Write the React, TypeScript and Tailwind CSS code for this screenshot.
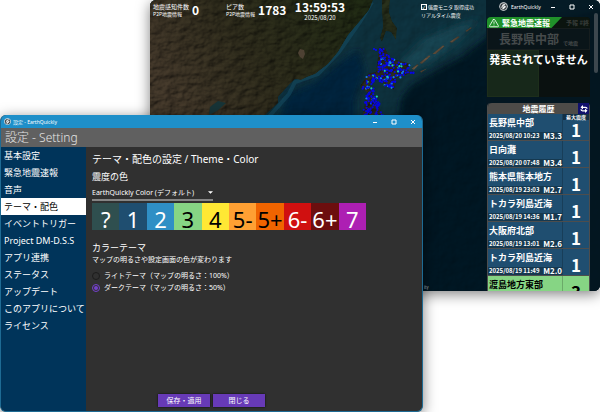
import { useState } from 'react'
import { FiAlertTriangle } from 'react-icons/fi'

interface Quake {
  place: string
  time?: string
  magnitude?: string
  intensity: string
  className: string
}

const quakes: Quake[] = [
  { place: '長野県中部', time: '2025/08/20 10:23', magnitude: 'M3.3', intensity: '1', className: 'bg-[#1f4e70] text-white' },
  { place: '日向灘', time: '2025/08/20 07:48', magnitude: 'M3.4', intensity: '1', className: 'bg-[#1f4e70] text-white' },
  { place: '熊本県熊本地方', time: '2025/08/19 23:03', magnitude: 'M2.7', intensity: '1', className: 'bg-[#1f4e70] text-white' },
  { place: 'トカラ列島近海', time: '2025/08/19 14:36', magnitude: 'M1.7', intensity: '1', className: 'bg-[#1f4e70] text-white' },
  { place: '大阪府北部', time: '2025/08/19 13:01', magnitude: 'M2.6', intensity: '1', className: 'bg-[#1f4e70] text-white' },
  { place: 'トカラ列島近海', time: '2025/08/19 11:49', magnitude: 'M2.0', intensity: '1', className: 'bg-[#1f4e70] text-white' },
  { place: '渡島地方東部', intensity: '3', className: 'bg-[#86d584] text-black' },
]

const navItems = [
  '基本設定',
  '緊急地震速報',
  '音声',
  'テーマ・配色',
  'イベントトリガー',
  'Project DM-D.S.S',
  'アプリ連携',
  'ステータス',
  'アップデート',
  'このアプリについて',
  'ライセンス',
]

const scale = [
  { label: '?', className: 'bg-[#2f4f4f] text-white' },
  { label: '1', className: 'bg-[#1f4e70] text-white' },
  { label: '2', className: 'bg-[#2f8fc5] text-white' },
  { label: '3', className: 'bg-[#86d584] text-black' },
  { label: '4', className: 'bg-[#ffe834] text-black' },
  { label: '5-', className: 'bg-[#ffa033] text-black' },
  { label: '5+', className: 'bg-[#f06400] text-black' },
  { label: '6-', className: 'bg-[#d01010] text-white' },
  { label: '6+', className: 'bg-[#6c0e0e] text-white' },
  { label: '7', className: 'bg-[#ad1fb3] text-white' },
]

type Point = [number, number]

// Station areas: Hokkaido and northern Tohoku
const hokkaido: Point[] = [[229, 47], [235, 48], [240, 58], [250, 62], [261, 64], [257, 70], [266, 72], [255, 77], [246, 78], [244, 90], [232, 84], [227, 79], [222, 84], [214, 87], [214, 80], [219, 73], [226, 74], [228, 66], [230, 57]]
const tohoku: Point[] = [[210, 87], [222, 83], [224, 90], [227, 97], [230, 104], [234, 117], [212, 117], [214, 104], [217, 93]]

function inside([x, y]: Point, area: Point[]) {
  let hit = false
  for (let i = 0, j = area.length - 1; i < area.length; j = i++) {
    const [xi, yi] = area[i]
    const [xj, yj] = area[j]
    if (yi > y !== yj > y && x < ((xj - xi) * (y - yi)) / (yj - yi) + xi) hit = !hit
  }
  return hit
}

function makeStations() {
  let seed = 11
  const next = () => {
    seed = (seed * 16807) % 2147483647
    return seed / 2147483647
  }
  const stations: { x: number; y: number; color: string }[] = [
    { x: 224, y: 49, color: '#0808f0' },
    { x: 226, y: 50, color: '#0808f0' },
  ]
  for (let i = 0; i < 1000; i++) {
    const point: Point = [205 + next() * 64, 44 + next() * 74]
    const pick = next()
    if (!inside(point, hokkaido) && !inside(point, tohoku)) continue
    const warm = point[0] > 244 || (point[1] > 74 && point[1] < 92)
    const color = pick > (warm ? 0.88 : 0.97) ? '#20d0a0' : pick > (warm ? 0.7 : 0.9) ? '#1478f0' : '#0606e4'
    stations.push({ x: point[0], y: point[1], color })
  }
  return stations
}

const stations = makeStations()

function SeismicMap() {
  return (
    <svg className="absolute inset-0 size-full" viewBox="0 0 450 291" preserveAspectRatio="xMinYMin slice" aria-hidden="true">
      <defs>
        <linearGradient id="land" x1="0" y1="0.5" x2="1" y2="0.2">
          <stop offset="0" stopColor="#43382a" />
          <stop offset="0.4" stopColor="#2f2c1c" />
          <stop offset="1" stopColor="#1f2913" />
        </linearGradient>
        <filter id="terrain" x="0" y="0" width="1" height="1" colorInterpolationFilters="sRGB">
          <feTurbulence type="fractalNoise" baseFrequency="0.09 0.13" numOctaves="5" seed="4" result="noise" />
          <feDiffuseLighting in="noise" surfaceScale="2" lightingColor="#ffffff" result="relief">
            <feDistantLight azimuth="225" elevation="55" />
          </feDiffuseLighting>
          <feComposite in="relief" in2="SourceGraphic" operator="arithmetic" k1="1.1" result="lit" />
          <feComposite in="lit" in2="SourceGraphic" operator="in" />
        </filter>
        <filter id="seabed" x="0" y="0" width="1" height="1" colorInterpolationFilters="sRGB">
          <feTurbulence type="fractalNoise" baseFrequency="0.06" numOctaves="4" seed="9" result="noise" />
          <feDiffuseLighting in="noise" surfaceScale="1" lightingColor="#ffffff" result="relief">
            <feDistantLight azimuth="225" elevation="60" />
          </feDiffuseLighting>
          <feComposite in="relief" in2="SourceGraphic" operator="arithmetic" k1="1.15" />
        </filter>
        <filter id="soft" x="-0.2" y="-0.2" width="1.4" height="1.4">
          <feGaussianBlur stdDeviation="3" />
        </filter>
      </defs>
      <g filter="url(#seabed)">
        <rect width="450" height="291" fill="#0d303c" />
        <path d="M128 122 138 93 165 82 190 62 208 50 215 70 205 100 205 125Z" fill="#05243a" filter="url(#soft)" />
        <path d="m250 62 25-24 35-14 20-4-24 24-28 20-22 8Z" fill="#174250" filter="url(#soft)" />
        <path d="M460 8 345 30 313 56 280 74 260 86 251 98 246 130 200 300 460 300Z" fill="#001320" filter="url(#soft)" />
      </g>
      <path d="M222 2 210 22 189 52 168 74 145 82 139 94 116 120" fill="none" stroke="#155067" strokeWidth="4" opacity="0.5" />
      <g filter="url(#terrain)">
        <path d="M0 0H223L219 10 210 21 198 35 188 52 178 64 165 74 157 77 151 80 145 79 140 84 137 87 128 97 128 103 112 118H0Z" fill="url(#land)" />
        <path d="M232 0h8l-1 12 3 9 5 7-1 12-5-8-5-1-4 11-2-4 3-11-1-15Z" fill="#262e1a" />
        <path d="m315 31 6-4 1 1-5 4Zm-16 11 9-6 2 1-8 6Zm-17 12 11-9 2 1-9 8Zm-13 9 10-8 2 1-9 8Zm-8 6 6-5 2 1-5 5Zm9 2 8-3-7 5Z" fill="#5b4c3b" />
        <path d="m229 47 6 1 5 10 21 6-4 6 9 2-20 6-2 12-17-11-8 6 5 12 10 20h-22l5-24-7-7 9-13 7-1Z" fill="#2b2b1c" />
      </g>
      <path d="m150 49 4 1 1 4-2 5-3-2-2-4Z" fill="#4d4133" />
      <path d="m60 107 8-6 8 2-9 8-8 4Z" fill="#173437" />
      {stations.map(({ x, y, color }, i) => (
        <circle key={i} cx={x} cy={y} r="1.1" fill={color} />
      ))}
    </svg>
  )
}

function AppLogo({ className }: { className: string }) {
  return (
    <svg viewBox="0 0 16 16" className={className} aria-hidden="true">
      <circle cx="8" cy="8" r="7.5" fill="#e3e5e6" />
      <circle cx="8" cy="8" r="6" fill="#3b4246" />
      <path d="M3 10c2-1 2-4 4-6l5-1-2 4 3 1-5 5-3 0 2-3Z" fill="#eceeee" />
      <path d="m2 13 11-10" stroke="#555d61" strokeWidth="1.2" />
    </svg>
  )
}

function WindowButtons() {
  return (
    <div className="ml-auto flex h-full">
      <button type="button" aria-label="最小化" className="flex w-[19px] items-center justify-center">
        <svg viewBox="0 0 6 6" className="size-[6px]"><path d="M1 3.5h4" stroke="currentColor" /></svg>
      </button>
      <button type="button" aria-label="最大化" className="flex w-[19px] items-center justify-center">
        <svg viewBox="0 0 6 6" className="size-[6px]"><path d="M1 1h4v4H1Z" fill="none" stroke="currentColor" /></svg>
      </button>
      <button type="button" aria-label="閉じる" className="flex w-[19px] items-center justify-center">
        <svg viewBox="0 0 6 6" className="size-[6px]"><path d="m1 1 4 4M5 1 1 5" stroke="currentColor" /></svg>
      </button>
    </div>
  )
}

function Stat({ title, value }: { title: string; value: string }) {
  return (
    <div className="flex items-center gap-[3px]">
      <div>
        <p className="text-[6px] leading-[7px]">{title}</p>
        <p className="text-[5px] leading-[7px]">P2P地震情報</p>
      </div>
      <p className="text-[12px] font-bold leading-[14px]">{value}</p>
    </div>
  )
}

function AlertPanel() {
  return (
    <section className="relative flex h-20 flex-col overflow-hidden rounded-t-sm bg-[#07120f]">
      <div className="flex h-[11px] items-center justify-between bg-[#0b140f] pr-px">
        <h2 className="flex h-full w-[75px] items-center gap-[3px] bg-[#20912a] pl-[2px] text-[8px] font-bold leading-[11px] text-white [clip-path:polygon(0_0,100%_0,86%_100%,0_100%)]">
          <FiAlertTriangle className="size-[10px]" />
          緊急地震速報
        </h2>
        <span className="whitespace-nowrap text-[6px] font-bold text-[#383d3a]">予報 #終</span>
      </div>
      <div className="flex h-[22px] items-center justify-center gap-1 border border-[#161d1e] bg-[#0a1519] font-bold text-[#454a4b]">
        <span className="text-[12px] leading-[18px]">長野県中部</span>
        <span className="mt-2 text-[5px] leading-[6px]">で地震</span>
      </div>
      <div className="grid flex-1 grid-cols-2">
        <div className="border border-[#1d2e1b] bg-[#17281a]" />
        <div className="bg-[#0a1110]" />
      </div>
      <p className="absolute inset-x-0 top-[34px] whitespace-nowrap text-center text-[11px] font-bold leading-4 text-white">発表されていません</p>
    </section>
  )
}

function HistoryPanel() {
  return (
    <section className="rounded-t-sm border-x border-[#4d4d4d]">
      <div className="relative flex h-[11px] items-center justify-center rounded-t-sm bg-[#4d4b48]">
        <h2 className="text-[8px] font-bold leading-[11px] text-white">地震履歴</h2>
        <button type="button" aria-label="切り替え" className="absolute right-0 flex size-[11px] items-center justify-center bg-[#10106c] text-white">
          <svg viewBox="0 0 16 16" className="size-2">
            <path d="M4 4.500h7q3 0 3 3M12 11.500H5q-3 0-3-3" fill="none" stroke="currentColor" strokeWidth="2.500" />
            <path d="M6 0v9L1 4.500ZM10 7v9l5-4.500Z" fill="currentColor" />
          </svg>
        </button>
      </div>
      <ul>
        {quakes.map((quake, i) => (
          <li key={i} className={`flex h-[27px] border-b border-[#4d4d4d] font-bold ${quake.className}`}>
            <div className="flex flex-1 flex-col justify-between border-r border-black/20">
              <p className="whitespace-nowrap pl-px pt-[2px] text-[9px] leading-[13px]">{quake.place}</p>
              {quake.time && (
                <div className="flex h-2 items-center justify-between bg-[#163950] pl-px">
                  <time className="whitespace-nowrap text-[6px] leading-2">{quake.time}</time>
                  <span className="text-[8px] leading-2">{quake.magnitude}</span>
                </div>
              )}
            </div>
            <div className="flex w-[26px] flex-col items-center justify-end pb-px">
              {i === 0 && <span className="w-full whitespace-nowrap bg-[#132f45] text-center text-[5px] leading-[6px]">最大震度</span>}
              <span className="text-[17px] leading-[19px]">{quake.intensity}</span>
            </div>
          </li>
        ))}
      </ul>
    </section>
  )
}

function MonitorWindow() {
  return (
    <main className="absolute left-[150px] right-0 top-0 flex h-[291px] overflow-hidden rounded-md bg-[#001422] font-['Noto_Sans_CJK_JP','Noto_Sans',sans-serif] text-white shadow-[0_3px_14px_rgba(0,0,0,0.5)]">
      <SeismicMap />
      <div className="relative flex flex-1 items-start pl-[3px]">
        <div className="w-[73px] pt-[3px]">
          <Stat title="地震感知件数" value="0" />
        </div>
        <div className="w-[68px] pt-[3px]">
          <Stat title="ピア数" value="1783" />
        </div>
        <div className="w-[52px] text-center">
          <p className="text-[12px] font-bold leading-[14px]">13:59:53</p>
          <p className="text-[6px] leading-[7px]">2025/08/20</p>
        </div>
        <div className="ml-auto w-[65px] pt-[3px] text-[5px] leading-2">
          <label className="flex items-center gap-px whitespace-nowrap">
            <input type="checkbox" defaultChecked className="flex size-[6px] appearance-none items-center justify-center border border-white text-[5px] leading-[4px] checked:before:content-['✓']" />
            強震モニタ 取得成功
          </label>
          <p>リアルタイム震度</p>
        </div>
        <span className="absolute bottom-[2px] left-[274px] text-[4px] leading-[4px] text-white/70">ity</span>
      </div>
      <aside className="relative flex w-[114px] flex-col bg-[#041620]/80">
        <header className="flex h-[13px] shrink-0 items-center gap-[3px] pl-[13px] font-['Noto_Sans',sans-serif]">
          <AppLogo className="size-[9px] shrink-0" />
          <span className="text-[5px] leading-2">EarthQuickly</span>
          <WindowButtons />
        </header>
        <div className="flex items-start justify-between gap-1 pl-px pr-[2px]">
          <div className="flex flex-1 flex-col gap-[6px] pt-1">
            <AlertPanel />
            <HistoryPanel />
          </div>
          <div className="h-[60px] w-[4px] rounded-full bg-[#3c474e]" />
        </div>
      </aside>
    </main>
  )
}

function SettingsWindow() {
  const [page, setPage] = useState('テーマ・配色')
  const [theme, setTheme] = useState('dark')
  const themes = [
    { id: 'light', label: 'ライトテーマ（マップの明るさ：100%）' },
    { id: 'dark', label: 'ダークテーマ（マップの明るさ：50%）' },
  ]

  return (
    <section className="absolute bottom-0 left-0 top-[115px] flex w-[423px] flex-col overflow-hidden rounded-md border border-t-0 border-[#1e6b94] bg-[#303030] text-white shadow-[0_3px_14px_rgba(0,0,0,0.5)]">
      <header className="flex h-[13px] shrink-0 items-center gap-[2px] bg-[#1e8fc9] pl-[3px]">
        <AppLogo className="size-[7px]" />
        <span className="text-[5px] leading-2">設定 - EarthQuickly</span>
        <WindowButtons />
      </header>
      <h1 className="h-[19px] shrink-0 bg-[#606060] pl-1 text-[12px] font-light leading-5 text-[#e6e6e6]">設定 - Setting</h1>
      <div className="flex min-h-0 flex-1">
        <nav className="w-[85px] shrink-0 bg-[#00345a]">
          {navItems.map((item) => (
            <button
              key={item}
              type="button"
              onClick={() => setPage(item)}
              className={`block h-[17px] w-full whitespace-nowrap pl-[3px] text-left text-[9px] leading-[17px] ${item === page ? 'bg-white text-black' : ''}`}
            >
              {item}
            </button>
          ))}
        </nav>
        <div className="flex flex-1 flex-col px-[6px] pb-1 pt-1">
          <h2 className="text-[10px] leading-4">テーマ・配色の設定 / Theme・Color</h2>
          <label htmlFor="palette" className="mt-1 text-[9px] leading-3">震度の色</label>
          <div className="relative mt-1 w-[121px]">
            <select id="palette" className="block h-[14px] w-full appearance-none border-b-2 border-[#858585] bg-transparent pb-px text-[7px] leading-3">
              <option>EarthQuickly Color (デフォルト)</option>
            </select>
            <svg viewBox="0 0 6 3" className="pointer-events-none absolute right-0 top-1 h-[3px] w-[5px]"><path d="M0 0h6L3 3Z" fill="white" /></svg>
          </div>
          <div className="mt-[2px] grid w-[274px] grid-cols-10">
            {scale.map(({ label, className }) => (
              <div key={label} className={`flex h-[27px] items-center justify-center pt-1 text-[22px] leading-6 ${className}`}>{label}</div>
            ))}
          </div>
          <h3 className="mt-3 text-[9px] leading-3">カラーテーマ</h3>
          <p className="mt-[2px] text-[7px] leading-2">マップの明るさや設定画面の色が変わります</p>
          <fieldset className="mt-[6px]">
            {themes.map(({ id, label }) => (
              <label key={id} className="flex h-3 items-center gap-1 text-[7px] leading-3">
                <input
                  type="radio"
                  name="theme"
                  checked={theme === id}
                  onChange={() => setTheme(id)}
                  className="flex size-2 appearance-none items-center justify-center rounded-full border border-[#1c1c1c] checked:border-[#7441cc] checked:before:size-1 checked:before:rounded-full checked:before:bg-[#7441cc]"
                />
                {label}
              </label>
            ))}
          </fieldset>
          <div className="mt-auto flex gap-[3px] pl-[66px] text-[7px]">
            <button type="button" className="h-[13px] w-[52px] bg-[#673ab7] leading-3 shadow-[0_0_2px_rgba(0,0,0,0.8)]">保存・適用</button>
            <button type="button" className="h-[13px] w-[52px] bg-[#673ab7] leading-3 shadow-[0_0_2px_rgba(0,0,0,0.8)]">閉じる</button>
          </div>
        </div>
      </div>
    </section>
  )
}

export default function App() {
  return (
    <div className="relative min-h-screen overflow-hidden bg-white font-['Noto_Sans','Noto_Sans_CJK_JP',sans-serif]">
      <MonitorWindow />
      <SettingsWindow />
    </div>
  )
}
